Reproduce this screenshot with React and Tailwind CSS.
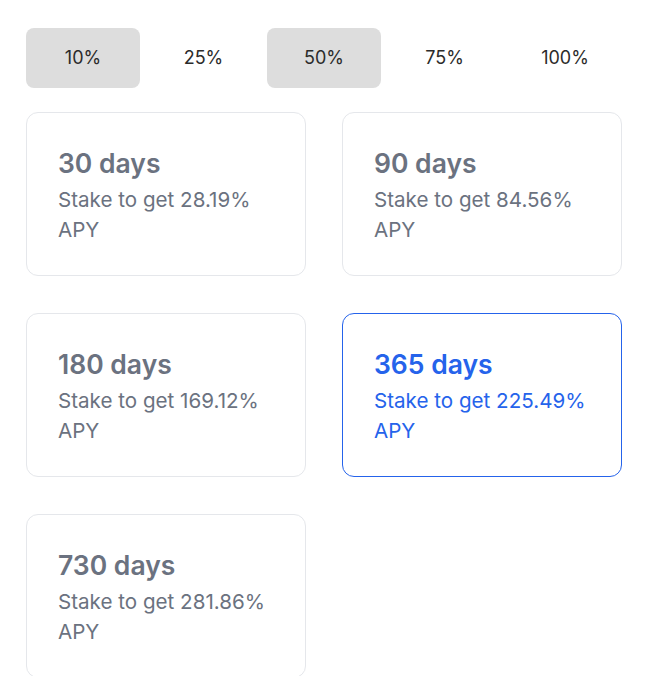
import React, { useState } from "react";

const amounts = ["10%", "25%", "50%", "75%", "100%"];

const plans = [
  { days: 30, apy: "28.19%" },
  { days: 90, apy: "84.56%" },
  { days: 180, apy: "169.12%" },
  { days: 365, apy: "225.49%" },
  { days: 730, apy: "281.86%" },
];

export default function App() {
  const [picked] = useState(["10%", "50%"]);
  const [plan, setPlan] = useState(365);

  return (
    <div
      className="min-h-screen bg-white px-[26px] pt-[28px] pb-8"
      style={{ fontFamily: "Inter, 'Noto Sans', sans-serif" }}
    >
      <div className="w-[596px]">
        <div className="flex gap-[6.5px]">
          {amounts.map((a) => (
            <button
              key={a}
              className={`w-[114px] h-[60px] rounded-lg text-lg text-[#2b2b2b] ${
                picked.includes(a) ? "bg-[#dddddd]" : "bg-transparent"
              }`}
            >
              {a}
            </button>
          ))}
        </div>

        <div className="mt-6 grid grid-cols-2 gap-x-9 gap-y-[37px]">
          {plans.map((p) => {
            const active = p.days === plan;
            return (
              <div
                key={p.days}
                onClick={() => setPlan(p.days)}
                className={`h-[164px] rounded-xl border px-[31px] pt-[34px] cursor-pointer ${
                  active
                    ? "border-[#2563eb] text-[#2563eb]"
                    : "border-[#e5e7eb] text-[#6b7280]"
                }`}
              >
                <h2 className="text-[26.5px] leading-8 font-semibold">
                  {p.days} days
                </h2>
                <p className="mt-[6px] text-[20.6px] leading-[30px] whitespace-nowrap">
                  Stake to get {p.apy}
                  <br />
                  APY
                </p>
              </div>
            );
          })}
        </div>
      </div>
    </div>
  );
}
